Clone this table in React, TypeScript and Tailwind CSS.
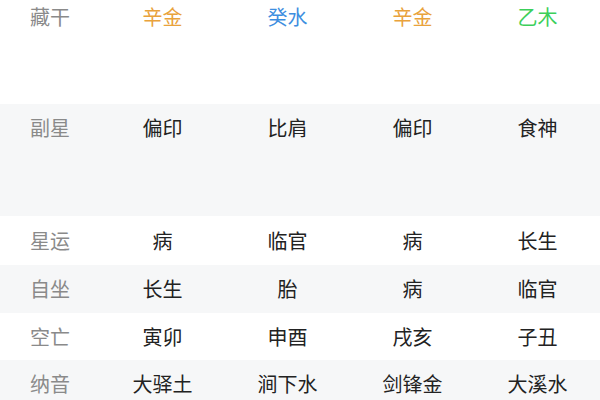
const rows = [
  {
    label: "藏干",
    cells: [
      { t: "辛金", c: "text-[#e9a23b]" },
      { t: "癸水", c: "text-[#3d8ee0]" },
      { t: "辛金", c: "text-[#e9a23b]" },
      { t: "乙木", c: "text-[#3ccf5a]" },
    ],
    row: "h-[104px] pt-[4px] items-start bg-white",
  },
  {
    label: "副星",
    cells: ["偏印", "比肩", "偏印", "食神"].map((t) => ({ t, c: "text-[#222]" })),
    row: "h-[112px] pt-[11px] items-start bg-[#f6f7f8]",
  },
  {
    label: "星运",
    cells: ["病", "临官", "病", "长生"].map((t) => ({ t, c: "text-[#222]" })),
    row: "h-[49px] items-center bg-white",
  },
  {
    label: "自坐",
    cells: ["长生", "胎", "病", "临官"].map((t) => ({ t, c: "text-[#222]" })),
    row: "h-[48px] items-center bg-[#f6f7f8]",
  },
  {
    label: "空亡",
    cells: ["寅卯", "申酉", "戌亥", "子丑"].map((t) => ({ t, c: "text-[#222]" })),
    row: "h-[47px] items-center bg-white",
  },
  {
    label: "纳音",
    cells: ["大驿土", "涧下水", "剑锋金", "大溪水"].map((t) => ({ t, c: "text-[#222]" })),
    row: "h-[48px] items-center bg-[#f6f7f8]",
  },
];

export default function App() {
  return (
    <div
      className="w-[600px] h-[400px] overflow-hidden bg-white text-[20px] leading-[26px]"
      style={{ fontFamily: '"Noto Sans CJK SC", "Noto Sans", sans-serif' }}
    >
      {rows.map((r) => (
        <div key={r.label} className={`grid grid-cols-[100px_repeat(4,1fr)] ${r.row}`}>
          <div className="text-center text-[#8a8a8a]">{r.label}</div>
          {r.cells.map((cell, i) => (
            <div key={i} className={`text-center ${cell.c}`}>
              {cell.t}
            </div>
          ))}
        </div>
      ))}
    </div>
  );
}
